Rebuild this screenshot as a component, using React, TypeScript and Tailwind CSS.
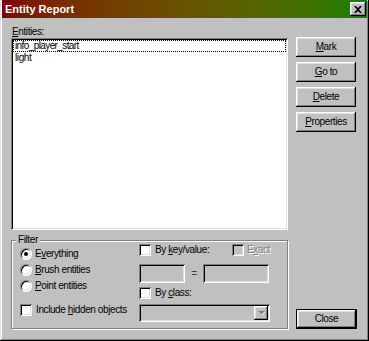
import React from 'react';

const raised =
  'shadow-[inset_-1px_-1px_#000,inset_1px_1px_#fff,inset_-2px_-2px_#808080,inset_2px_2px_#dfdfdf]';
const sunken =
  'shadow-[inset_1px_1px_#808080,inset_-1px_-1px_#fff,inset_2px_2px_#000,inset_-2px_-2px_#dfdfdf]';

const U: React.FC<{ children: React.ReactNode }> = ({ children }) => (
  <span className="underline underline-offset-[1px]">{children}</span>
);

const Button: React.FC<{ children: React.ReactNode; isDefault?: boolean }> = ({ children, isDefault }) =>
  isDefault ? (
    <div className="h-[20px] w-[61px] border border-black">
      <div className={`h-full w-full flex items-center justify-center ${raised}`}>{children}</div>
    </div>
  ) : (
    <div className={`h-[20px] w-[60px] flex items-center justify-center ${raised}`}>{children}</div>
  );

const Radio: React.FC<{ checked?: boolean }> = ({ checked }) => (
  <div className="w-[12px] h-[12px] shrink-0 rounded-full bg-white border border-t-[#808080] border-l-[#808080] border-b-white border-r-white flex items-center justify-center shadow-[inset_1px_1px_#000,inset_-1px_-1px_#dfdfdf]">
    {checked && <div className="w-[4px] h-[4px] rounded-full bg-black" />}
  </div>
);

const Check: React.FC<{ disabled?: boolean }> = ({ disabled }) => (
  <div className={`w-[12px] h-[12px] shrink-0 ${disabled ? 'bg-[#c0c0c0]' : 'bg-white'} ${sunken}`} />
);

export default function App() {
  return (
    <div
      className="w-[369px] h-[341px] bg-[#c0c0c0] px-[2px] pb-[2px] flex flex-col text-[10px] tracking-[-0.4px] leading-[12px] text-black whitespace-nowrap shadow-[inset_-1px_-1px_#000,inset_1px_1px_#dfdfdf,inset_-2px_-2px_#808080,inset_2px_2px_#fff]"
      style={{ fontFamily: '"Liberation Sans", Arial, sans-serif' }}
    >
      {/* Title bar */}
      <div className="h-[18px] flex items-center bg-linear-to-r from-[#800000] to-[#008000] pl-[3px] pr-[1px]">
        <span className="text-white font-bold text-[11px] tracking-normal">Entity Report</span>
        <div className={`ml-auto w-[16px] h-[14px] bg-[#c0c0c0] flex items-center justify-center ${raised}`}>
          <svg width="8" height="7" viewBox="0 0 8 7">
            <path d="M0 0h2l2 2 2-2h2L5 3.5 8 7H6L4 5 2 7H0l3-3.5z" fill="#000" />
          </svg>
        </div>
      </div>

      {/* Body */}
      <div className="flex flex-1 pl-[9px] pr-[10px]">
        <div className="w-[278px] flex flex-col">
          <div className="mt-[8px] h-[12px] pl-[1px]">
            <U>E</U>ntities:
          </div>
          <div className={`h-[192px] bg-white p-[2px] ${sunken}`}>
            <div className="h-[12px] border border-dotted border-black pl-[1px] leading-[10px] tracking-[-0.6px]">info_player_start</div>
            <div className="h-[12px] pl-[2px]">light</div>
          </div>

          <fieldset className="mt-[4px] h-[95px] border border-[#808080] shadow-[inset_1px_1px_#fff,1px_1px_#fff] px-[8px] flex">
            <legend className="ml-[-4px] px-[2px] bg-[#c0c0c0] leading-[12px]">Filter</legend>
            <div className="flex w-full">
              <div className="w-[119px] flex flex-col">
                <div className="h-[16px] flex items-center gap-[3px]">
                  <Radio checked />
                  <span>E<U>v</U>erything</span>
                </div>
                <div className="h-[16px] flex items-center gap-[3px]">
                  <Radio />
                  <span><U>B</U>rush entities</span>
                </div>
                <div className="h-[16px] flex items-center gap-[3px]">
                  <Radio />
                  <span><U>P</U>oint entities</span>
                </div>
                <div className="mt-[8px] h-[16px] flex items-center gap-[4px]">
                  <Check />
                  <span>Include <U>h</U>idden objects</span>
                </div>
              </div>
              <div className="w-[131px] flex flex-col">
                <div className="mt-[-3px] h-[14px] flex items-center">
                  <Check />
                  <span className="ml-[4px]">By <U>k</U>ey/value:</span>
                  <div className="ml-auto flex items-center gap-[3px]">
                    <Check disabled />
                    <span className="text-[#808080] [text-shadow:1px_1px_#fff]">E<U>x</U>act</span>
                  </div>
                </div>
                <div className="mt-[7px] h-[19px] flex items-center">
                  <div className={`w-[46px] h-full bg-[#c0c0c0] ${sunken}`} />
                  <div className="w-[18px] text-center text-[#404040]">=</div>
                  <div className={`w-[66px] h-full bg-[#c0c0c0] ${sunken}`} />
                </div>
                <div className="mt-[4px] h-[12px] flex items-center gap-[4px]">
                  <Check />
                  <span>By <U>c</U>lass:</span>
                </div>
                <div className={`mt-[5px] h-[18px] bg-[#c0c0c0] p-[2px] flex justify-end ${sunken}`}>
                  <div className={`w-[14px] h-full bg-[#c0c0c0] flex items-center justify-center ${raised}`}>
                    <svg width="7" height="5" viewBox="0 0 7 5">
                      <path d="M1 1h6L4 4z" fill="#fff" />
                      <path d="M0 0h7L3.5 3.5z" fill="#808080" />
                    </svg>
                  </div>
                </div>
              </div>
            </div>
          </fieldset>
        </div>

        <div className="ml-[8px] w-[61px] flex flex-col pt-[19px] pb-[10px]">
          <div className="flex flex-col gap-[5px]">
            <Button><span><U>M</U>ark</span></Button>
            <Button><span><U>G</U>o to</span></Button>
            <Button><span><U>D</U>elete</span></Button>
            <Button><span><U>P</U>roperties</span></Button>
          </div>
          <div className="mt-auto">
            <Button isDefault>Close</Button>
          </div>
        </div>
      </div>
    </div>
  );
}
